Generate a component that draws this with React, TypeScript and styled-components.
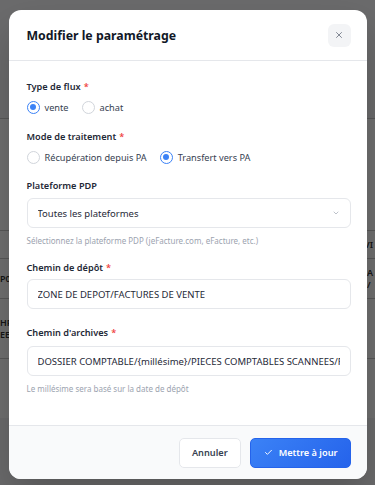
import React from "react";
import styled, { createGlobalStyle } from "styled-components";

const GlobalStyle = createGlobalStyle`
  * { box-sizing: border-box; }
  html, body { margin: 0; padding: 0; }
  body {
    font-family: "Noto Sans", "Open Sans", Arial, sans-serif;
    background: #ffffff;
    color: #1f2937;
  }
`;

const Page = styled.div`
  position: relative;
  width: 375px;
  height: 485px;
  overflow: hidden;
  background: #f3f4f6;
`;

const BgTable = styled.div`
  display: flex;
  flex-direction: column;
  padding-top: 118px;
`;

const BgRow = styled.div<{ h: number }>`
  height: ${(p) => p.h}px;
  border-top: 1px solid #c9c9c9;
  display: flex;
  align-items: center;
  justify-content: space-between;
  padding: 0 2px 0 0;
  font-size: 9px;
  font-weight: 600;
  color: #333;
  line-height: 1.3;
  background: #fff;
`;

const Overlay = styled.div`
  position: absolute;
  inset: 0;
  background: rgba(0, 0, 0, 0.56);
  display: flex;
  align-items: flex-start;
  justify-content: center;
  padding-top: 10px;
`;

const Modal = styled.div`
  width: 358px;
  height: 469px;
  background: #ffffff;
  border-radius: 12px;
  overflow: hidden;
  display: flex;
  flex-direction: column;
  box-shadow: 0 20px 40px rgba(0, 0, 0, 0.2);
`;

const Header = styled.div`
  height: 51px;
  flex-shrink: 0;
  display: flex;
  align-items: center;
  justify-content: space-between;
  padding: 0 16px 0 18px;
  border-bottom: 1px solid #e5e7eb;
`;

const Title = styled.h2`
  margin: 0;
  font-size: 12.3px;
  font-weight: 700;
  color: #111827;
`;

const CloseButton = styled.button`
  width: 23px;
  height: 23px;
  border: none;
  border-radius: 6px;
  background: #f3f4f6;
  display: flex;
  align-items: center;
  justify-content: center;
  padding: 0;
  color: #6b7280;
`;

const Body = styled.div`
  flex: 1;
  padding: 18px 16px 0 18px;
  display: flex;
  flex-direction: column;
  gap: 13px;
`;

const Field = styled.div<{ extra?: number }>`
  display: flex;
  flex-direction: column;
  margin-top: ${(p) => p.extra ?? 0}px;
`;

const Label = styled.div<{ gap: number }>`
  font-size: 9.2px;
  font-weight: 600;
  line-height: 16px;
  color: #1f2937;
  margin-bottom: ${(p) => p.gap}px;
`;

const Required = styled.span`
  color: #ef4444;
  margin-left: 3px;
`;

const RadioRow = styled.div`
  display: flex;
  align-items: center;
  gap: 13px;
  height: 16px;
`;

const RadioOption = styled.label`
  display: flex;
  align-items: center;
  gap: 5px;
  font-size: 9.2px;
  color: #374151;
`;

const RadioCircle = styled.span<{ checked?: boolean }>`
  width: 13px;
  height: 13px;
  border-radius: 50%;
  border: 1.5px solid ${(p) => (p.checked ? "#3b82f6" : "#d1d5db")};
  display: flex;
  align-items: center;
  justify-content: center;
  background: #fff;

  &::after {
    content: "";
    width: 6px;
    height: 6px;
    border-radius: 50%;
    background: ${(p) => (p.checked ? "#3b82f6" : "transparent")};
  }
`;

const Box = styled.div`
  height: 30px;
  border: 1px solid #e5e7eb;
  border-radius: 6px;
  display: flex;
  align-items: center;
  justify-content: space-between;
  padding: 0 10px 0 10px;
  font-size: 9.5px;
  color: #1f2937;
  white-space: nowrap;
  overflow: hidden;
`;

const BoxText = styled.span`
  overflow: hidden;
`;

const Helper = styled.div`
  font-size: 8px;
  color: #9ca3af;
  margin-top: 6px;
  line-height: 13px;
`;

const Footer = styled.div`
  height: 54px;
  flex-shrink: 0;
  border-top: 1px solid #e5e7eb;
  background: #f9fafb;
  display: flex;
  align-items: center;
  justify-content: flex-end;
  gap: 9px;
  padding: 0 16px;
`;

const Button = styled.button<{ primary?: boolean }>`
  height: 30px;
  border-radius: 5px;
  font-family: inherit;
  font-size: 9.2px;
  font-weight: 600;
  display: flex;
  align-items: center;
  gap: 6px;
  padding: ${(p) => (p.primary ? "0 12px 0 13px" : "0 12px")};
  border: 1px solid ${(p) => (p.primary ? "#2563eb" : "#e5e7eb")};
  background: ${(p) =>
    p.primary ? "linear-gradient(135deg, #3b82f6, #2563eb)" : "#ffffff"};
  color: ${(p) => (p.primary ? "#ffffff" : "#374151")};
`;

const Radio: React.FC<{ label: string; checked?: boolean }> = ({
  label,
  checked,
}) => (
  <RadioOption>
    <RadioCircle checked={checked} />
    {label}
  </RadioOption>
);

export default function App() {
  return (
    <Page>
      <GlobalStyle />
      <BgTable>
        <BgRow h={112} />
        <BgRow h={28}>
          <span />
          <span>VI</span>
        </BgRow>
        <BgRow h={40}>
          <span>P0</span>
          <span>A<br />/</span>
        </BgRow>
        <BgRow h={60}>
          <span>HPT<br />EES</span>
          <span />
        </BgRow>
        <BgRow h={60} />
      </BgTable>
      <Overlay>
        <Modal>
          <Header>
            <Title>Modifier le paramétrage</Title>
            <CloseButton aria-label="Fermer">
              <svg width="10" height="10" viewBox="0 0 24 24" fill="none" stroke="currentColor" strokeWidth="2" strokeLinecap="round">
                <path d="M18 6 6 18M6 6l12 12" />
              </svg>
            </CloseButton>
          </Header>
          <Body>
            <Field>
              <Label gap={4}>
                Type de flux<Required>*</Required>
              </Label>
              <RadioRow>
                <Radio label="vente" checked />
                <Radio label="achat" />
              </RadioRow>
            </Field>
            <Field extra={1}>
              <Label gap={4}>
                Mode de traitement<Required>*</Required>
              </Label>
              <RadioRow>
                <Radio label="Récupération depuis PA" />
                <Radio label="Transfert vers PA" checked />
              </RadioRow>
            </Field>
            <Field>
              <Label gap={4}>Plateforme PDP</Label>
              <Box>
                <BoxText>Toutes les plateformes</BoxText>
                <svg width="8" height="8" viewBox="0 0 24 24" fill="none" stroke="#9ca3af" strokeWidth="2" strokeLinecap="round" strokeLinejoin="round">
                  <path d="m6 9 6 6 6-6" />
                </svg>
              </Box>
              <Helper>Sélectionnez la plateforme PDP (jeFacture.com, eFacture, etc.)</Helper>
            </Field>
            <Field>
              <Label gap={3}>
                Chemin de dépôt<Required>*</Required>
              </Label>
              <Box>
                <BoxText>ZONE DE DEPOT/FACTURES DE VENTE</BoxText>
              </Box>
            </Field>
            <Field extra={3}>
              <Label gap={5}>
                Chemin d'archives<Required>*</Required>
              </Label>
              <Box>
                <BoxText>DOSSIER COMPTABLE/{"{millésime}"}/PIECES COMPTABLES SCANNEES/FACTURES</BoxText>
              </Box>
              <Helper>Le millésime sera basé sur la date de dépôt</Helper>
            </Field>
          </Body>
          <Footer>
            <Button>Annuler</Button>
            <Button primary>
              <svg width="9" height="9" viewBox="0 0 24 24" fill="none" stroke="currentColor" strokeWidth="2.5" strokeLinecap="round" strokeLinejoin="round">
                <path d="M20 6 9 17l-5-5" />
              </svg>
              Mettre à jour
            </Button>
          </Footer>
        </Modal>
      </Overlay>
    </Page>
  );
}
